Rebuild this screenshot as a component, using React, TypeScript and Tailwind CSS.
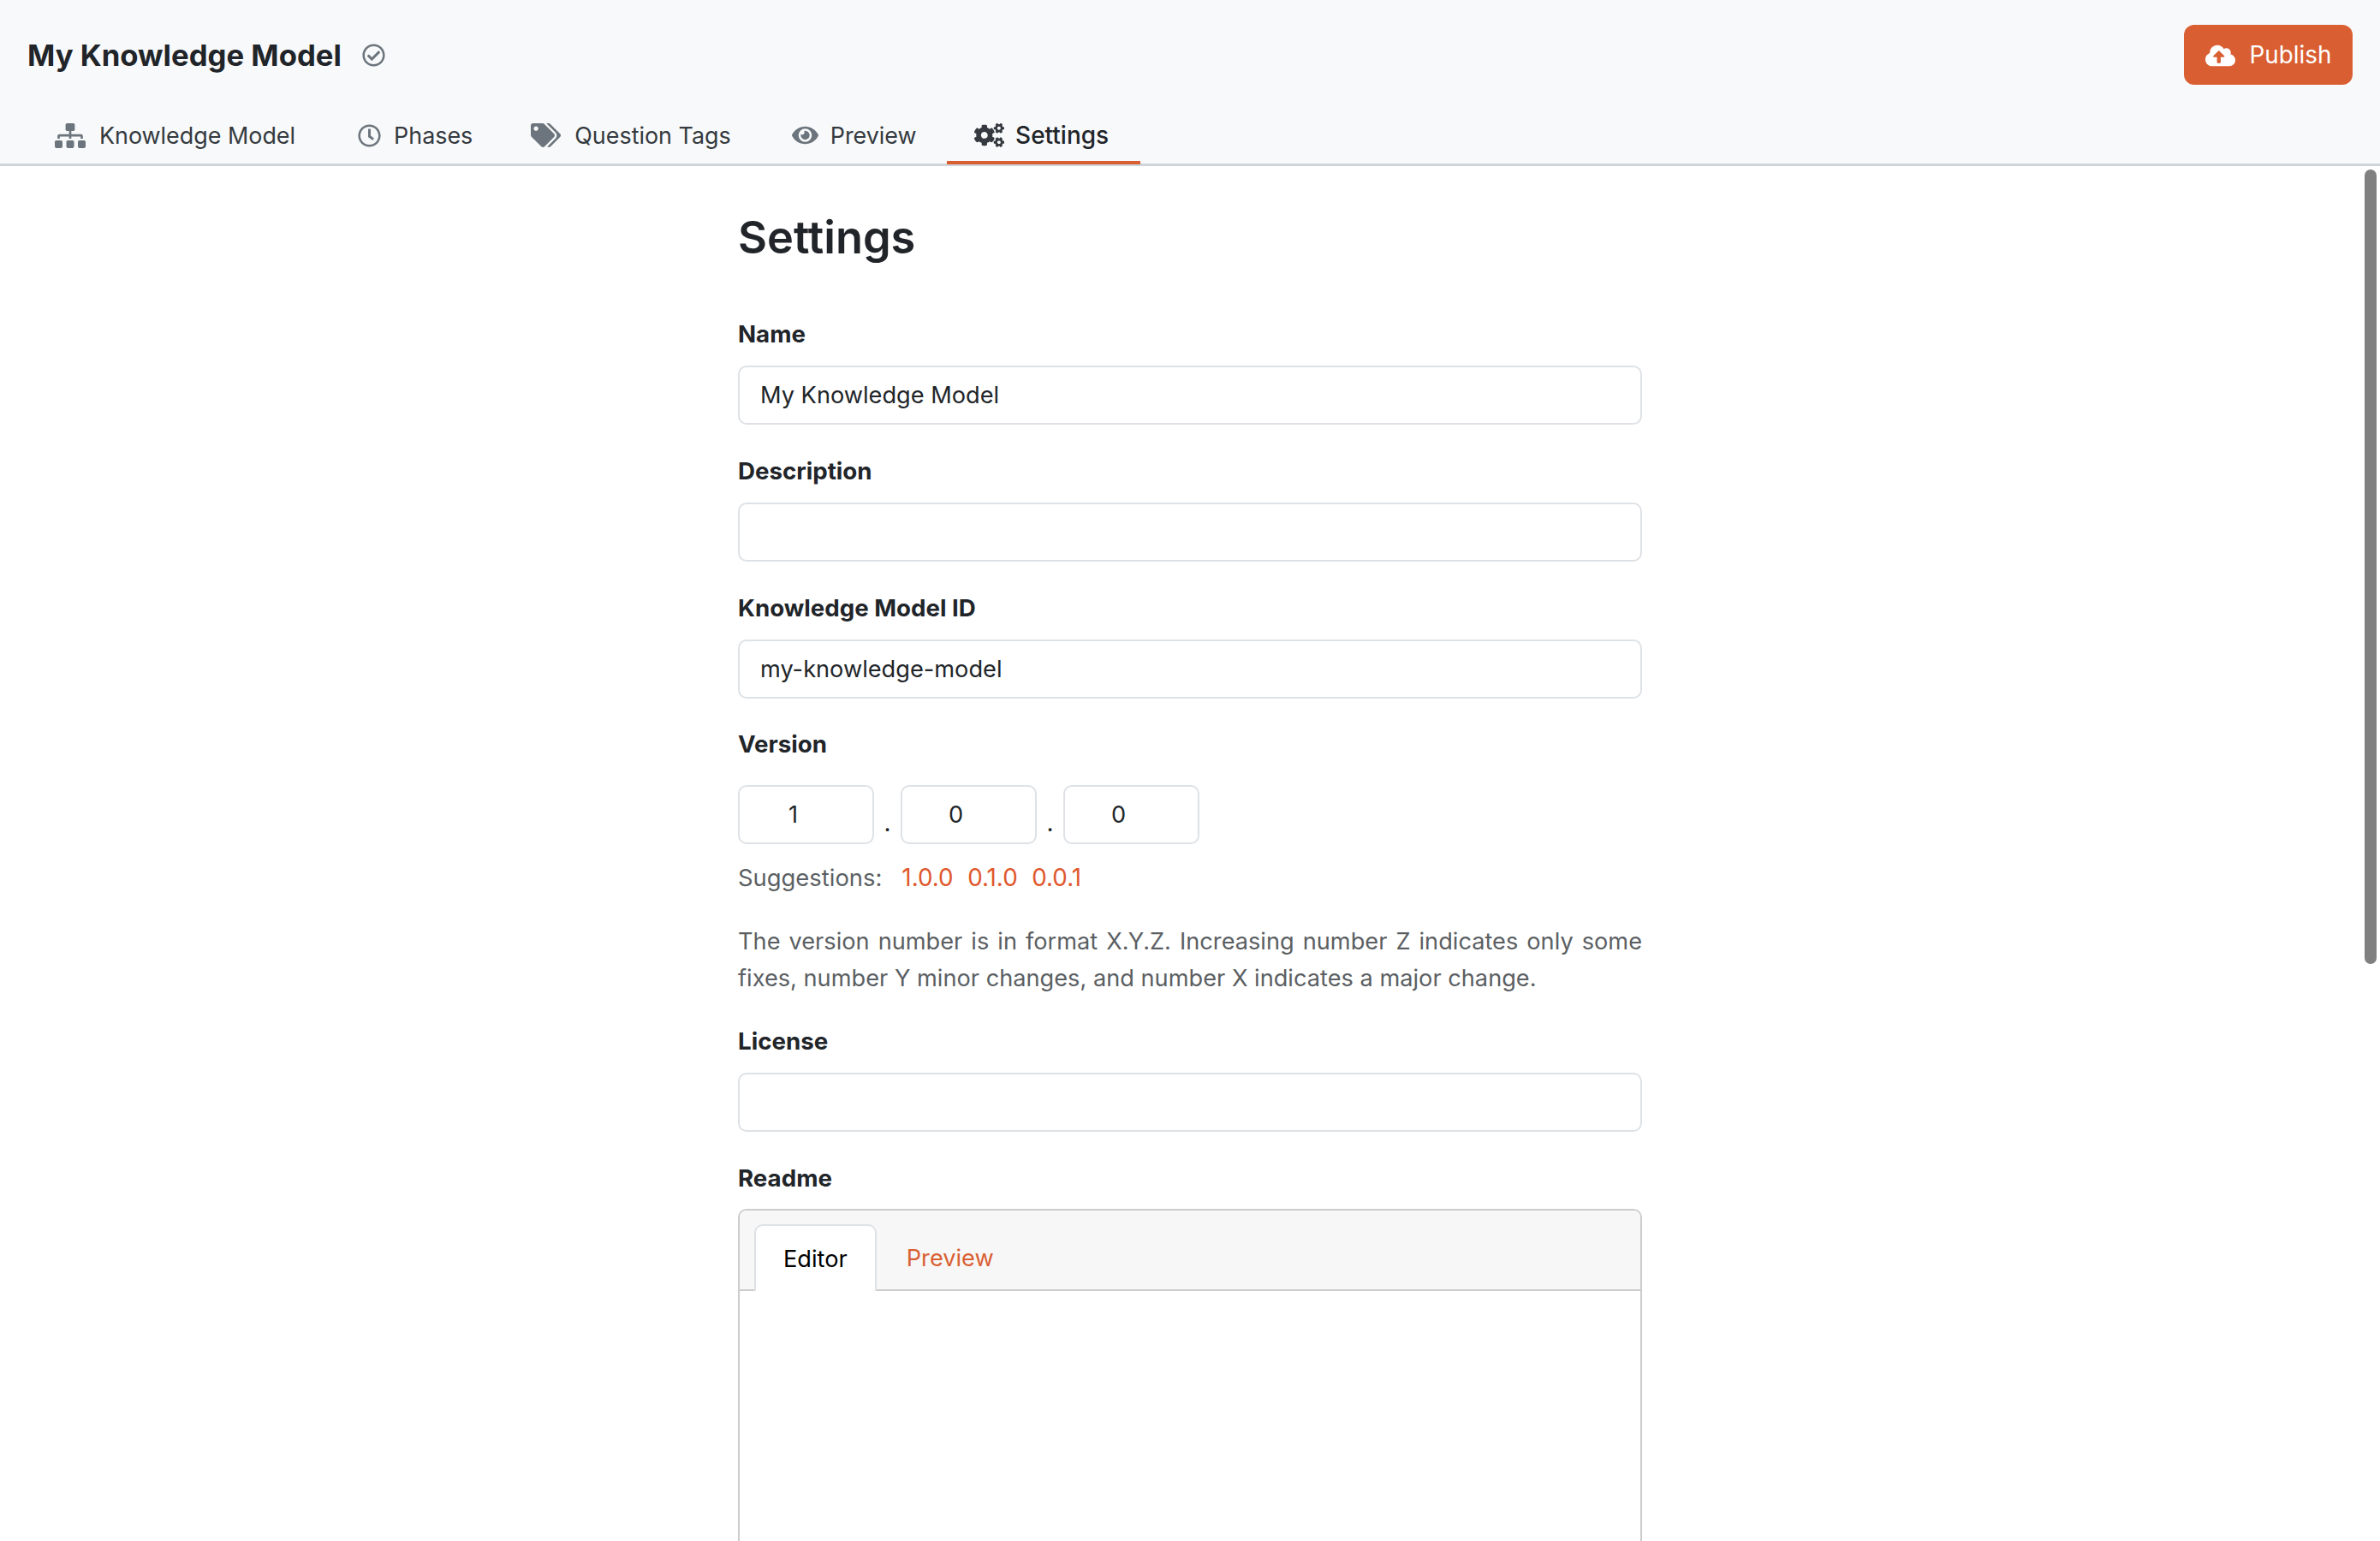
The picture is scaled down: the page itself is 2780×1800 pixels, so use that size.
import { ReactNode } from "react";
import { FaCloudUploadAlt, FaCogs, FaEye, FaRegCheckCircle, FaRegClock, FaSitemap, FaTags } from "react-icons/fa";

const tabs = [
  { label: "Knowledge Model", pad: "pr-[41px]", icon: <FaSitemap className="w-[36px] h-[29px] mr-[16px]" /> },
  { label: "Phases", pad: "pr-[36px]", icon: <FaRegClock className="w-[27px] h-[27px] mr-[15px]" /> },
  { label: "Question Tags", pad: "pr-[39px]", icon: <FaTags className="w-[35px] h-[28px] mr-[16px]" /> },
  { label: "Preview", pad: "pr-[35.5px]", icon: <FaEye className="w-[31px] h-[28px] mr-[14px]" /> },
  { label: "Settings", pad: "pr-[36.5px]", icon: <FaCogs className="w-[35px] h-[28px] mr-[13px]" />, active: true },
];

function Label({ children }: { children: ReactNode }) {
  return <label className="block text-[27.7px] leading-[42px] font-bold text-[#212529] mb-[16px]">{children}</label>;
}

function Field({ label, value = "" }: { label: string; value?: string }) {
  return (
    <div className="mb-[33px]">
      <Label>{label}</Label>
      <input
        readOnly
        value={value}
        className="block w-full h-[69px] px-[24px] text-[27.2px] text-[#212529] bg-white border-2 border-[#dee2e6] rounded-[10px] outline-none"
      />
    </div>
  );
}

function VersionInput({ value }: { value: string }) {
  return (
    <input
      readOnly
      value={value}
      className="block w-[159px] h-[69px] pl-[25px] pr-[55px] text-center text-[27.2px] text-[#212529] bg-white border-2 border-[#dee2e6] rounded-[10px] outline-none"
    />
  );
}

export default function App() {
  return (
    <div className="relative h-[1800px] overflow-hidden bg-white font-[Inter,sans-serif]">
      <header className="h-[194px] bg-[#f8f9fa] border-b-[3px] border-[#ced4da] flex flex-col justify-between">
        <div className="flex items-start justify-between pl-[32px] pr-[32px] pt-[29px]">
          <div className="flex items-center h-[70px]">
            <h1 className="text-[34.7px] font-bold text-[#212529]">My Knowledge Model</h1>
            <FaRegCheckCircle className="w-[27px] h-[27px] ml-[24px] text-[#6c757d]" />
          </div>
          <button className="flex items-center justify-center w-[197px] h-[70px] pt-[1px] rounded-[12px] bg-[#d95f33] text-white text-[27.8px]">
            <FaCloudUploadAlt className="w-[35px] h-[28px] mr-[17px]" />
            Publish
          </button>
        </div>
        <nav className="flex pl-[32px] -mb-[1px]">
          {tabs.map((tab) => (
            <a
              key={tab.label}
              className={
                tab.active
                  ? `flex items-center h-[60px] pl-[32px] ${tab.pad} pb-[4px] text-[28px] font-medium text-[#212529] border-b-4 border-[#d95f33]`
                  : `flex items-center h-[60px] pl-[32px] ${tab.pad} pb-[4px] text-[26.9px] text-[#343a40] border-b-4 border-transparent`
              }
            >
              <span className={tab.active ? "text-[#343a40]" : "text-[#6c757d]"}>{tab.icon}</span>
              {tab.label}
            </a>
          ))}
        </nav>
      </header>

      <main className="w-[1056px] ml-[862px] pt-[48px]">
        <h2 className="text-[52.3px] leading-[70px] font-semibold text-[#212529] mb-[57px]">Settings</h2>
        <Field label="Name" value="My Knowledge Model" />
        <Field label="Description" />
        <Field label="Knowledge Model ID" value="my-knowledge-model" />

        <div className="-mt-[1px] mb-[31.5px]">
          <Label>Version</Label>
          <div className="flex items-end mt-[27px]">
            <VersionInput value="1" />
            <span className="w-[31px] text-center text-[28px] leading-[50px] text-[#212529]">.</span>
            <VersionInput value="0" />
            <span className="w-[31px] text-center text-[28px] leading-[50px] text-[#212529]">.</span>
            <VersionInput value="0" />
          </div>
          <div className="flex mt-[18px] text-[27.4px] leading-[42px] text-[#5b5f63]">
            <span className="mr-[23px]">Suggestions:</span>
            <span className="flex gap-[16.5px] text-[27.8px] text-[#e0582d]">
              <a>1.0.0</a>
              <a>0.1.0</a>
              <a>0.0.1</a>
            </span>
          </div>
        </div>

        <p className="text-[27.2px] leading-[43px] text-[#5b5f63] text-justify mb-[31.5px]">
          The version number is in format X.Y.Z. Increasing number Z indicates only some fixes, number Y minor changes, and number X indicates a major change.
        </p>

        <Field label="License" />

        <Label>Readme</Label>
        <div className="h-[900px] -mt-[1px] border-2 border-[#cccccc] rounded-[10px] overflow-hidden">
          <div className="flex items-end h-[94px] pl-[17px] bg-[#f7f7f7] border-b-2 border-[#cccccc]">
            <a className="flex items-center h-[78px] -mb-[2px] pt-[2px] px-[32px] text-[27.2px] text-black bg-white border-2 border-b-0 border-[#dee2e6] rounded-t-[10px]">
              Editor
            </a>
            <a className="flex items-center h-[78px] -mb-[2px] pt-[2px] ml-[2px] px-[33px] text-[27.2px] text-[#d95f33]">Preview</a>
          </div>
        </div>
      </main>

      <div className="absolute top-[198px] right-[4px] w-[14px] h-[928px] rounded-full bg-[#808080]" />
    </div>
  );
}
